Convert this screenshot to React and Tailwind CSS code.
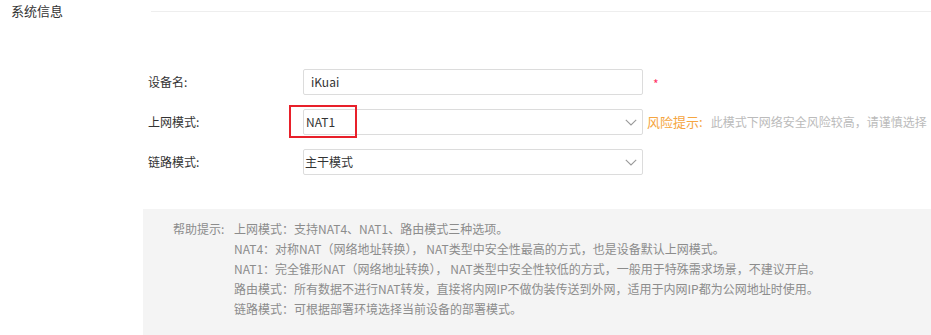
const Chevron = () => (
  <svg width="12" height="7" viewBox="0 0 12 7" className="text-[#9a9a9a]">
    <path d="M0.8 0.8l5.2 5.2 5.2-5.2" fill="none" stroke="currentColor" strokeWidth="1.1" />
  </svg>
);

const helpLines = [
  "上网模式：支持NAT4、NAT1、路由模式三种选项。",
  "NAT4：对称NAT（网络地址转换）， NAT类型中安全性最高的方式，也是设备默认上网模式。",
  "NAT1：完全锥形NAT（网络地址转换）， NAT类型中安全性较低的方式，一般用于特殊需求场景，不建议开启。",
  "路由模式：所有数据不进行NAT转发，直接将内网IP不做伪装传送到外网，适用于内网IP都为公网地址时使用。",
  "链路模式：可根据部署环境选择当前设备的部署模式。",
];

export default function App() {
  return (
    <div
      className="relative w-[931px] h-[335px] overflow-hidden bg-white"
      style={{ fontFamily: '"Microsoft YaHei", "Noto Sans CJK SC", sans-serif' }}
    >
      <div className="flex items-center h-[22px]">
        <div className="w-[151px] pl-[11px] text-[13px] text-[#333]">系统信息</div>
        <div className="flex-1 border-t border-[#eeeeee]" />
      </div>

      <div className="flex flex-col gap-[14px] mt-[47px] pl-[148px]">
        <div className="flex items-center h-[26px]">
          <div className="w-[155px] text-[12px] text-[#333]">设备名:</div>
          <div className="w-[340px] h-[26px] border border-[#dcdcdc] rounded-[2px] flex items-center pl-[7px] text-[12px] text-[#333]">
            iKuai
          </div>
          <span className="ml-[10px] text-[#f36] text-[12px] leading-none mt-[3px]">*</span>
        </div>

        <div className="flex items-center h-[26px]">
          <div className="w-[155px] text-[12px] text-[#333]">上网模式:</div>
          <div className="relative w-[340px] h-[26px] border border-[#dcdcdc] rounded-[2px] flex items-center justify-between pl-[2px] pr-[5px] text-[12px] text-[#333]">
            <span>NAT1</span>
            <Chevron />
            <div className="absolute left-[-15px] top-[-5px] w-[68px] h-[33px] border-2 border-[#e8202a]" />
          </div>
          <span className="ml-[4px] text-[13px] text-[#f5a540]">风险提示:</span>
          <span className="ml-[8px] text-[12px] text-[#bbbbbb]">此模式下网络安全风险较高，请谨慎选择</span>
        </div>

        <div className="flex items-center h-[26px]">
          <div className="w-[155px] text-[12px] text-[#333]">链路模式:</div>
          <div className="w-[340px] h-[26px] border border-[#dcdcdc] rounded-[2px] flex items-center justify-between pl-[1px] pr-[5px] text-[12px] text-[#333]">
            <span>主干模式</span>
            <Chevron />
          </div>
        </div>
      </div>

      <div className="mt-[34px] ml-[143px] h-[126px] bg-[#f4f4f4] pt-[10px] pl-[30px] flex text-[12px] leading-[20px] text-[#8c8c8c]">
        <div className="w-[61px] shrink-0">帮助提示:</div>
        <div className="flex flex-col">
          {helpLines.map((l) => (
            <div key={l} className="whitespace-pre">{l}</div>
          ))}
        </div>
      </div>
    </div>
  );
}
